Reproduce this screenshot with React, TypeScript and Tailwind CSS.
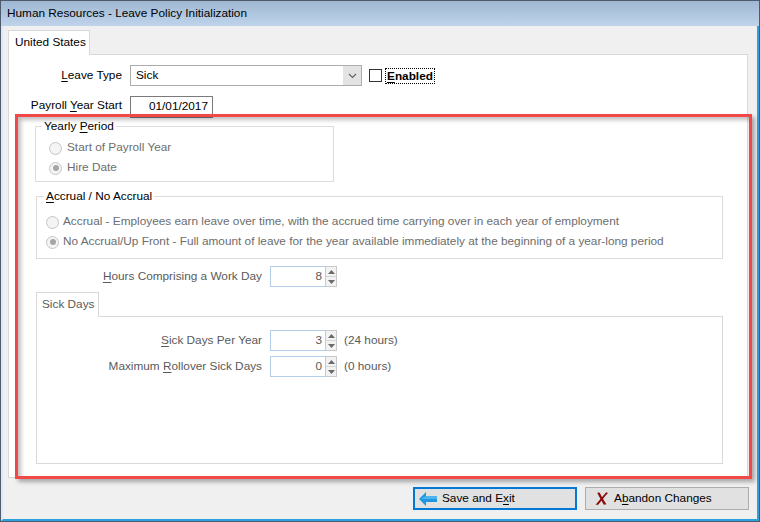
import type { ReactNode } from "react";

const FONT = "font-['Liberation_Sans',Arial,sans-serif]";

function U({ children }: { children: ReactNode }) {
    return <span className="underline underline-offset-[2px]">{children}</span>;
}

function Radio({ checked }: { checked?: boolean }) {
    return (
        <span className="flex h-[13px] w-[13px] shrink-0 items-center justify-center rounded-full border border-[#c6c6c6] bg-[#f4f4f4]">
            {checked && <span className="h-[6px] w-[6px] rounded-full bg-[#a6a6a6]" />}
        </span>
    );
}

function Spin({ value }: { value: string }) {
    return (
        <div className="flex h-[21px] w-[67px] shrink-0">
            <div className="flex-1 border border-r-0 border-[#b4cde9] bg-white pr-[3px] text-right leading-[19px] text-[#5a5a5a]">
                {value}
            </div>
            <div className="flex w-[12px] flex-col border border-[#c9c9c9] bg-[#f2f2f2]">
                <div className="flex flex-1 items-center justify-center border-b border-[#d6d6d6]">
                    <svg width="7" height="4" viewBox="0 0 7 4">
                        <path d="M0 4 L3.5 0 L7 4 Z" fill="#6a6a6a" />
                    </svg>
                </div>
                <div className="flex flex-1 items-center justify-center">
                    <svg width="7" height="4" viewBox="0 0 7 4">
                        <path d="M0 0 L7 0 L3.5 4 Z" fill="#6a6a6a" />
                    </svg>
                </div>
            </div>
        </div>
    );
}

export default function App() {
    return (
        <div className={`relative h-[522px] w-[760px] overflow-hidden border border-[#4d5b6b] bg-[#f0f0f0] text-[11.8px] text-black ${FONT}`}>
            {/* Title bar */}
            <div className="flex h-[25px] items-center bg-gradient-to-b from-[#9fb7d2] to-[#bfd4eb] pl-[6px]">
                Human Resources - Leave Policy Initialization
            </div>

            {/* Body */}
            <div className="flex h-[495px] flex-col border-r-2 border-b-2 border-l-2 border-r-[#2aa2e0] border-b-[#2aa2e0] border-l-[#dfe9f5]">
                {/* Tab strip */}
                <div className="ml-[5px] mt-[4px] flex">
                    <div className="relative z-10 -mb-px flex h-[25px] w-[82px] items-center border border-b-0 border-[#d9d9d9] bg-white pl-[6px]">
                        United States
                    </div>
                </div>

                {/* Panel */}
                <div className="ml-[5px] flex h-[424px] w-[740px] flex-col border border-[#d9d9d9] bg-white">
                    {/* Leave Type */}
                    <div className="mt-[10px] flex items-center">
                        <div className="w-[113px] text-right">
                            <U>L</U>eave Type
                        </div>
                        <div className="ml-[8px] flex h-[21px] w-[232px] border border-[#acacac] bg-white">
                            <div className="flex-1 pl-[5px] leading-[19px]">Sick</div>
                            <div className="flex w-[18px] items-center justify-center bg-[#e3e3e3]">
                                <svg width="9" height="6" viewBox="0 0 9 6">
                                    <path d="M1 1 L4.5 4.5 L8 1" fill="none" stroke="#606060" strokeWidth="1.1" />
                                </svg>
                            </div>
                        </div>
                        <div className="ml-[7px] h-[13px] w-[13px] border border-[#333] bg-white" />
                        <div className="ml-[3px] border border-dotted border-black px-[1px] font-bold leading-[14px]">
                            <U>E</U>nabled
                        </div>
                    </div>

                    {/* Payroll Year Start */}
                    <div className="mt-[10px] flex items-start">
                        <div className="w-[113px] pt-[1px] text-right">
                            Payroll <U>Y</U>ear Start
                        </div>
                        <div className="ml-[8px] h-[22px] w-[83px] border border-[#7a7a7a] bg-white pr-[4px] text-right leading-[18px]">
                            01/01/2017
                        </div>
                    </div>

                    {/* Yearly Period */}
                    <fieldset className="ml-[26px] w-[299px] border border-[#dcdcdc] pb-[3px] pl-[13px]">
                        <legend className="-ml-[7px] px-[2px] leading-[16px]">
                            Yearly <U>P</U>eriod
                        </legend>
                        <div className="mt-[4px] flex h-[20px] items-center gap-[5px] text-[#6d6d6d]">
                            <Radio />
                            Start of Payroll Year
                        </div>
                        <div className="flex h-[20px] items-center gap-[5px] text-[#6d6d6d]">
                            <Radio checked />
                            Hire Date
                        </div>
                    </fieldset>

                    {/* Accrual / No Accrual */}
                    <fieldset className="ml-[27px] mt-[6px] w-[687px] border border-[#dcdcdc] pb-[6px] pl-[9px]">
                        <legend className="-ml-[2px] px-[2px] leading-[16px]">
                            <U>A</U>ccrual / No Accrual
                        </legend>
                        <div className="mt-[8px] flex h-[20px] items-center gap-[4px] text-[#6d6d6d]">
                            <Radio />
                            Accrual - Employees earn leave over time, with the accrued time carrying over in each year of employment
                        </div>
                        <div className="flex h-[20px] items-center gap-[4px] text-[#6d6d6d]">
                            <Radio checked />
                            No Accrual/Up Front - Full amount of leave for the year available immediately at the beginning of a year-long period
                        </div>
                    </fieldset>

                    {/* Hours */}
                    <div className="mt-[7px] flex items-center">
                        <div className="w-[253px] text-right text-[#5a5a5a]">
                            <U>H</U>ours Comprising a Work Day
                        </div>
                        <div className="ml-[8px]">
                            <Spin value="8" />
                        </div>
                    </div>

                    {/* Sick Days tab */}
                    <div className="ml-[27px] mt-[5px] flex">
                        <div className="relative z-10 -mb-px flex h-[25px] w-[63px] items-center border border-b-0 border-[#d9d9d9] bg-white pl-[5px] text-[#5a5a5a]">
                            Sick Days
                        </div>
                    </div>
                    <div className="ml-[27px] flex h-[148px] w-[687px] flex-col gap-[5px] border border-[#d9d9d9] bg-white pt-[13px]">
                        <div className="flex items-center">
                            <div className="w-[225px] text-right text-[#5a5a5a]">
                                <U>S</U>ick Days Per Year
                            </div>
                            <div className="ml-[8px]">
                                <Spin value="3" />
                            </div>
                            <div className="ml-[7px] text-[#5a5a5a]">(24 hours)</div>
                        </div>
                        <div className="flex items-center">
                            <div className="w-[225px] text-right text-[#5a5a5a]">
                                Maximum <U>R</U>ollover Sick Days
                            </div>
                            <div className="ml-[8px]">
                                <Spin value="0" />
                            </div>
                            <div className="ml-[7px] text-[#5a5a5a]">(0 hours)</div>
                        </div>
                    </div>
                </div>

                {/* Buttons */}
                <div className="mr-[8px] mt-[9px] flex justify-end gap-[8px]">
                    <button className="flex h-[23px] w-[164px] items-center border-2 border-[#0078d7] bg-[#e1e1e1] pl-[4px] text-left">
                        <svg width="18" height="14" viewBox="0 0 18 14">
                            <path d="M0 7 L7 0 L7 4 L18 4 L18 10 L7 10 L7 14 Z" fill="#1c97e0" />
                            <path d="M7 4 L18 4 L18 7 L2 7 Z" fill="#4cb4ee" />
                        </svg>
                        <span className="ml-[5px]">
                            Save and E<U>x</U>it
                        </span>
                    </button>
                    <button className="flex h-[23px] w-[164px] items-center border border-[#adadad] bg-[#e1e1e1] pl-[9px] text-left">
                        <svg width="13" height="13" viewBox="0 0 13 13">
                            <path d="M11.2 0.3 L13 1 C9.5 4.8 6.5 8.5 3.2 12.7 L0.6 12.7 C4.2 8.6 7.6 4.4 11.2 0.3 Z" fill="#8b0a0a" />
                            <path d="M2.2 0.8 L4.6 0.6 C6.4 4.2 8.4 8 11.4 12.2 L8.9 12.7 C6.3 8.9 4.3 5 2.2 0.8 Z" fill="#8b0a0a" />
                        </svg>
                        <span className="ml-[6px]">
                            A<U>b</U>andon Changes
                        </span>
                    </button>
                </div>
            </div>

            {/* Red highlight annotation */}
            <div className="pointer-events-none absolute left-[14px] top-[113px] h-[365px] w-[737px] border-[3px] border-[#f24848] shadow-[3px_3px_4px_rgba(0,0,0,0.3),inset_3px_3px_4px_rgba(0,0,0,0.25)]" />
        </div>
    );
}
